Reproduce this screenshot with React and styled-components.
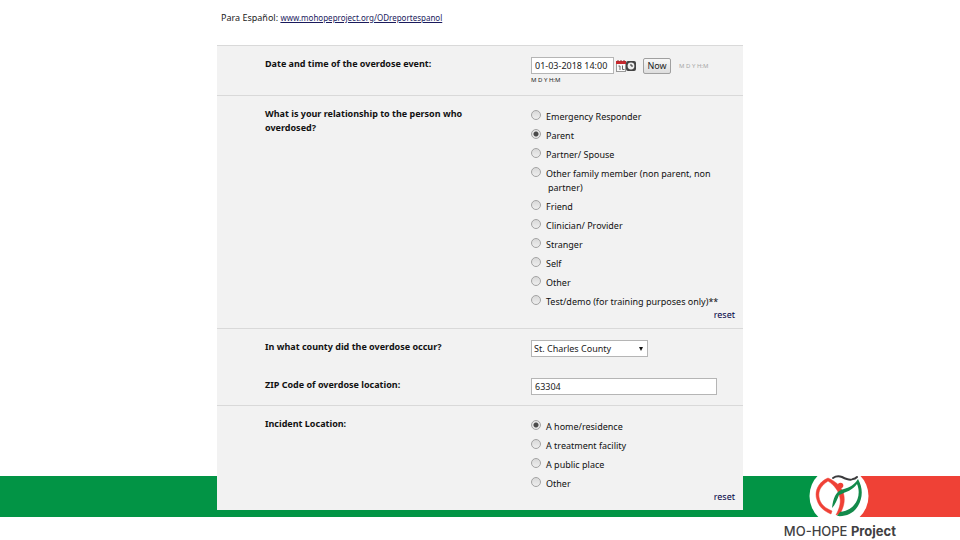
import React from 'react'
import styled, { createGlobalStyle } from 'styled-components'

const GlobalStyle = createGlobalStyle`
* {
box-sizing: border-box;
}
body {
margin: 0;
background: #ffffff;
color: #111111;
font-family: "Noto Sans", "Open Sans", sans-serif;
font-size: 9px;
line-height: 14px;
}
`

const Page = styled.div`
display: flex;
flex-direction: column;
overflow: hidden;
`

const Survey = styled.main`
width: 100%;
max-width: 526px;
margin: 0 auto;
position: relative;
z-index: 1;
`

const Language = styled.p`
margin: 0;
padding: 11px 4px 20px;
color: #222222;
`

const LanguageLink = styled.a`
font-size: 8px;
color: #1a1a5c;
`

const Form = styled.form`
background: #f2f2f2;
`

const Row = styled.div`
display: grid;
grid-template-columns: 266px 1fr;
min-height: ${({ $height }) => $height}px;
padding: 11px 8px 6px 48px;
border-top: ${({ $plain }) => ($plain ? 'none' : '1px solid #d9d9d9')};
`

const Question = styled.div`
max-width: 220px;
font-weight: 700;
`

const Field = styled.div`
display: flex;
align-items: center;
align-self: start;
`

const TextInput = styled.input`
width: ${({ $width }) => $width}px;
height: 17px;
padding: 0 3px;
border: 1px solid #b5b5b5;
background: #ffffff;
color: #222222;
font: inherit;
`

const Select = styled.select`
display: block;
appearance: none;
width: 117px;
height: 17px;
padding: 0 2px;
border: 1px solid #b5b5b5;
border-radius: 0;
background: #ffffff;
color: #222222;
font: inherit;
`

const SelectBox = styled.div`
position: relative;
justify-self: start;
align-self: start;

svg {
position: absolute;
top: 7px;
right: 5px;
pointer-events: none;
}
`

const IconButton = styled.button`
display: flex;
padding: 0;
border: none;
background: none;
`

const Icons = styled.div`
display: flex;
margin: 0 7px 0 2px;
`

const NowButton = styled.button`
width: 28px;
height: 16px;
padding: 0;
border: 1px solid #a0a0a0;
border-radius: 2px;
background: linear-gradient(#f8f8f8, #dddddd);
color: #222222;
font: inherit;
line-height: 12px;
`

const Format = styled.span`
display: block;
font-size: 6px;
line-height: 12px;
color: ${({ $muted }) => ($muted ? '#a6a6a6' : '#222222')};
margin-left: ${({ $muted }) => ($muted ? 8 : 0)}px;
`

const Options = styled.div`
display: flex;
flex-direction: column;
gap: 5px;
padding-top: 3px;
`

const Option = styled.label`
display: flex;
gap: 5px;
max-width: 202px;

span {
padding-left: 2px;
text-indent: -2px;
}
`

const Radio = styled.input`
appearance: none;
flex: none;
width: 10px;
height: 10px;
margin: 0;
border: 1px solid #a3a3a3;
border-radius: 50%;
background: linear-gradient(#d9d9d9, #eeeeee);

&:checked {
background: radial-gradient(circle, #4a4a4a 0 2px, #e6e6e6 3px);
}
`

const Reset = styled.button`
align-self: flex-end;
margin-top: -6px;
padding: 0;
border: none;
background: none;
color: #000044;
font: inherit;
`

const Footer = styled.footer`
position: relative;
margin-top: -34px;
`

const Band = styled.div`
display: grid;
grid-template-columns: 1fr 120px;
height: 41px;
`

const Green = styled.div`
background: #029445;
`

const Red = styled.div`
background: #ef4136;
`

const Logo = styled.svg`
position: absolute;
top: -10px;
right: 90px;
`

const Brand = styled.div`
padding: 5px 64px 0 0;
text-align: right;
font-family: Inter, sans-serif;
font-size: 13px;
line-height: 18px;
font-weight: 500;
color: #414042;

strong {
font-weight: 700;
}
`

const relationships = [
  'Emergency Responder',
  'Parent',
  'Partner/ Spouse',
  'Other family member (non parent, non partner)',
  'Friend',
  'Clinician/ Provider',
  'Stranger',
  'Self',
  'Other',
  'Test/demo (for training purposes only)**',
]

const locations = ['A home/residence', 'A treatment facility', 'A public place', 'Other']

const CalendarIcon = () => (
  <svg width="10" height="12" viewBox="0 0 10 12">
    <rect x="0.5" y="1.5" width="9" height="10" fill="#fafafa" stroke="#999" />
    <rect x="0" y="1" width="10" height="3" fill="#c8282d" />
    <path d="M2 0v2M5 0v2M8 0v2" stroke="#8c3034" />
    <path d="M2.5 6h1.5v4M6.5 5.5v4h2" fill="none" stroke="#666" />
  </svg>
)

const ClockIcon = () => (
  <svg width="10" height="12" viewBox="0 0 10 12">
    <rect x="0" y="1" width="10" height="10" rx="2" fill="#444" />
    <circle cx="5" cy="6" r="3.4" fill="#eee" />
    <path d="M5 4v2h2" fill="none" stroke="#333" />
  </svg>
)

const LogoMark = () => (
  <Logo width="62" height="62" viewBox="0 0 62 62" aria-hidden="true">
    <circle cx="31" cy="30" r="29.5" fill="#fff" />
    <path
      d="M20 12C10 16 6 26 9 34c2 7 7 11 14 14l1-3C17 42 12 38 11 31c-1-7 3-12 9-16 6 4 11 10 12 17 1 6-1 11-4 17l4-1c3-6 5-11 4-18-1-8-7-14-16-18z"
      fill="#ef4136"
      stroke="#ef4136"
      strokeWidth="0.5"
    />
    <circle cx="32.5" cy="19.5" r="2.8" fill="#ef4136" />
    <path
      d="M50 13C45 21 39 22 33 24c-5 2-8 8-9 18 3-3 5-8 7-13 7-3 14-5 18-11 3 7 2 15-3 21-4 5-9 6-14 7l-3 4c9 1 17-3 21-10 5-9 5-18 0-27z"
      fill="#138a4b"
    />
    <path
      d="M25 12c3-2 6-2 9-1 4 2 8 4 11 2 2 0 3-1 4-2"
      fill="none"
      stroke="#3a3a3c"
      strokeWidth="2"
      strokeLinecap="round"
    />
  </Logo>
)

function RadioGroup({ name, options, selected, labelledBy }) {
  return (
    <Options role="radiogroup" aria-labelledby={labelledBy}>
      {options.map((option) => (
        <Option key={option}>
          <Radio type="radio" name={name} value={option} defaultChecked={option === selected} />
          <span>{option}</span>
        </Option>
      ))}
      <Reset type="button">reset</Reset>
    </Options>
  )
}

function App() {
  return (
    <Page>
      <GlobalStyle />
      <Survey>
        <Language>
          Para Español: <LanguageLink href="#espanol">www.mohopeproject.org/ODreportespanol</LanguageLink>
        </Language>
        <Form>
          <Row $height={50}>
            <Question as="label" htmlFor="date">Date and time of the overdose event:</Question>
            <div>
              <Field>
                <TextInput id="date" $width={83} defaultValue="01-03-2018 14:00" />
                <Icons>
                  <IconButton type="button" aria-label="Calendar"><CalendarIcon /></IconButton>
                  <IconButton type="button" aria-label="Time"><ClockIcon /></IconButton>
                </Icons>
                <NowButton type="button">Now</NowButton>
                <Format $muted>M D Y H:M</Format>
              </Field>
              <Format>M D Y H:M</Format>
            </div>
          </Row>
          <Row $height={233}>
            <Question id="relationship">What is your relationship to the person who overdosed?</Question>
            <RadioGroup
              name="relationship"
              options={relationships}
              selected="Parent"
              labelledBy="relationship"
            />
          </Row>
          <Row $height={39}>
            <Question as="label" htmlFor="county">In what county did the overdose occur?</Question>
            <SelectBox>
              <Select id="county" defaultValue="St. Charles County">
                <option>St. Charles County</option>
              </Select>
              <svg width="4" height="4" viewBox="0 0 4 4" aria-hidden="true">
                <path d="M0 0h4L2 4z" fill="#111" />
              </svg>
            </SelectBox>
          </Row>
          <Row $height={38} $plain>
            <Question as="label" htmlFor="zip">ZIP Code of overdose location:</Question>
            <Field>
              <TextInput id="zip" $width={186} defaultValue="63304" />
            </Field>
          </Row>
          <Row $height={105}>
            <Question id="location">Incident Location:</Question>
            <RadioGroup
              name="location"
              options={locations}
              selected="A home/residence"
              labelledBy="location"
            />
          </Row>
        </Form>
      </Survey>
      <Footer>
        <Band>
          <Green />
          <Red />
        </Band>
        <LogoMark />
        <Brand>MO-HOPE <strong>Project</strong></Brand>
      </Footer>
    </Page>
  )
}

export default App
